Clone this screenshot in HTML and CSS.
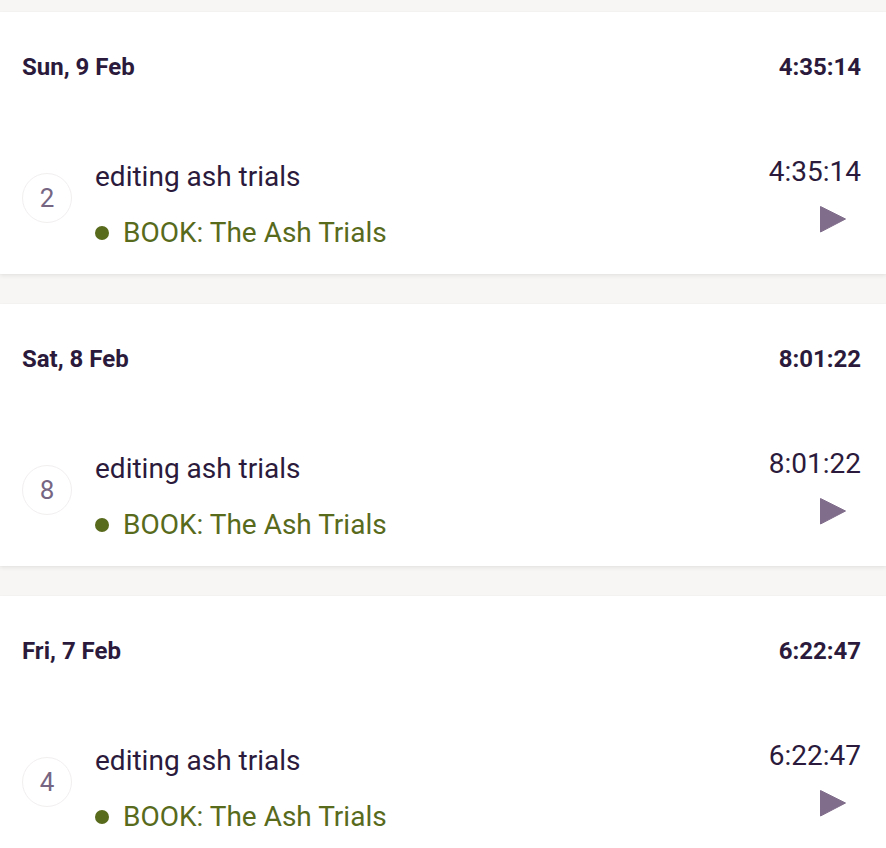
FILE: index.html
```html
<!DOCTYPE html>
<html lang="en">
<head>
<meta charset="utf-8">
<title>Time log</title>
<link rel="stylesheet" href="styles.css">
</head>
<body>
<main class="days">
  <section class="day">
    <header class="day-head"><span class="day-date">Sun, 9 Feb</span><span class="day-total">4:35:14</span></header>
    <div class="entry">
      <div class="entry-count">2</div>
      <div class="entry-main">
        <div class="entry-title">editing ash trials</div>
        <div class="entry-project"><span class="dot"></span>BOOK: The Ash Trials</div>
      </div>
      <div class="entry-side">
        <div class="entry-time">4:35:14</div>
        <svg class="play" width="28" height="28" viewBox="0 0 28 28"><path d="M1.5 1.5 L26.5 14 L1.5 27 Z" /></svg>
      </div>
    </div>
  </section>
  <section class="day">
    <header class="day-head"><span class="day-date">Sat, 8 Feb</span><span class="day-total">8:01:22</span></header>
    <div class="entry">
      <div class="entry-count">8</div>
      <div class="entry-main">
        <div class="entry-title">editing ash trials</div>
        <div class="entry-project"><span class="dot"></span>BOOK: The Ash Trials</div>
      </div>
      <div class="entry-side">
        <div class="entry-time">8:01:22</div>
        <svg class="play" width="28" height="28" viewBox="0 0 28 28"><path d="M1.5 1.5 L26.5 14 L1.5 27 Z" /></svg>
      </div>
    </div>
  </section>
  <section class="day">
    <header class="day-head"><span class="day-date">Fri, 7 Feb</span><span class="day-total">6:22:47</span></header>
    <div class="entry">
      <div class="entry-count">4</div>
      <div class="entry-main">
        <div class="entry-title">editing ash trials</div>
        <div class="entry-project"><span class="dot"></span>BOOK: The Ash Trials</div>
      </div>
      <div class="entry-side">
        <div class="entry-time">6:22:47</div>
        <svg class="play" width="28" height="28" viewBox="0 0 28 28"><path d="M1.5 1.5 L26.5 14 L1.5 27 Z" /></svg>
      </div>
    </div>
  </section>
</main>
</body>
</html>
```

FILE: styles.css
```css
html, body {
  margin: 0;
  padding: 0;
  background: #f7f6f4;
  font-family: Roboto, "Liberation Sans", sans-serif;
  color: #2b1a3b;
}

.days {
  display: flex;
  flex-direction: column;
  gap: 30px;
  padding-top: 12px;
}

.day {
  background: #ffffff;
  height: 262px;
  box-sizing: border-box;
  padding: 41px 25px 0 22px;
  box-shadow: 0 0 1px rgba(0, 0, 0, 0.06), 0 2px 4px rgba(0, 0, 0, 0.07);
}

.day-head {
  display: flex;
  justify-content: space-between;
  font-size: 24px;
  font-weight: 700;
  line-height: 28px;
}

.entry {
  display: flex;
  align-items: flex-start;
  margin-top: 74px;
}

.entry-count {
  width: 50px;
  height: 50px;
  box-sizing: border-box;
  border: 1px solid #f2efef;
  border-radius: 50%;
  margin-top: 18px;
  display: flex;
  align-items: center;
  justify-content: center;
  font-size: 26px;
  color: #766683;
}

.entry-main {
  flex: 1;
  margin-left: 23px;
  padding-top: 5px;
  font-size: 28px;
  line-height: 34px;
  display: flex;
  flex-direction: column;
  gap: 22px;
}

.entry-project {
  color: #586a1c;
  display: flex;
  align-items: center;
}

.dot {
  width: 14px;
  height: 14px;
  border-radius: 50%;
  background: #586a1c;
  margin-right: 14px;
}

.entry-side {
  display: flex;
  flex-direction: column;
  align-items: flex-end;
}

.entry-time {
  font-size: 28px;
  line-height: 34px;
}

.play {
  display: block;
  margin-top: 16px;
  margin-right: 14px;
  fill: #806d8b;
  stroke: #806d8b;
  stroke-width: 1;
  stroke-linejoin: round;
}
```
